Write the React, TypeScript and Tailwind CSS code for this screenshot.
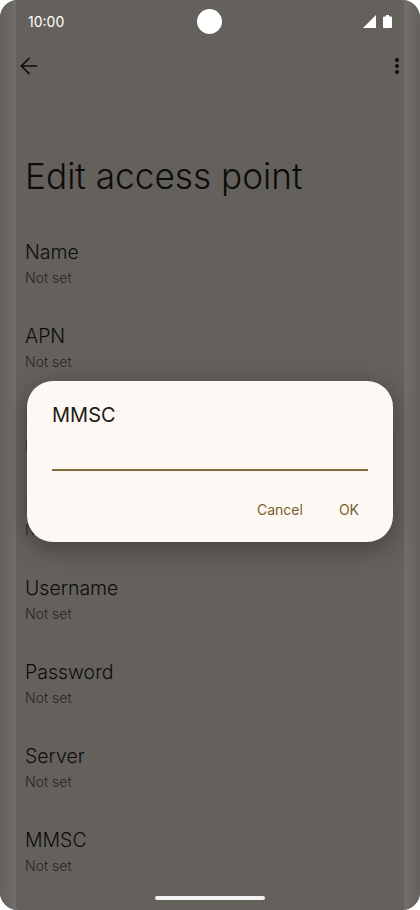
import { ArrowLeft } from 'lucide-react'

const rows = ['Name', 'APN', 'Proxy', 'Port', 'Username', 'Password', 'Server', 'MMSC']

export default function App() {
  return (
    <div className="relative w-[420px] h-[910px] overflow-hidden bg-white font-['Inter',sans-serif]">
      {/* Screen */}
      <div className="relative w-full h-full rounded-[18px] overflow-hidden bg-[#64615c]">
        {/* Status bar */}
        <div className="flex items-center justify-between h-[42px] pl-[28px] pr-[28px]">
          <span className="text-white text-[14px] font-normal">10:00</span>
          <div className="flex items-center gap-[7px]">
            <svg width="13" height="13" viewBox="0 0 13 13"><path d="M13 0V13H0Z" fill="#fff" /></svg>
            <svg width="9" height="13" viewBox="0 0 9 13"><path d="M3 0H6V1.5H8A1 1 0 0 1 9 2.5V12A1 1 0 0 1 8 13H1A1 1 0 0 1 0 12V2.5A1 1 0 0 1 1 1.5H3Z" fill="#fff" /></svg>
          </div>
        </div>

        {/* Toolbar */}
        <div className="flex items-center justify-between h-[48px] pl-[16px] pr-[20px]">
          <ArrowLeft className="w-[26px] h-[26px] text-[#0d0d0c]" strokeWidth={1.5} />
          <svg width="6" height="18" viewBox="0 0 6 18" fill="#0d0d0c">
            <circle cx="3" cy="3" r="2" />
            <circle cx="3" cy="9" r="2" />
            <circle cx="3" cy="15" r="2" />
          </svg>
        </div>

        <h1 className="mt-[62px] pl-[25px] text-[35.2px] leading-[48px] font-light text-[#0c0c0b]">Edit access point</h1>

        <div className="mt-[38px] pl-[25px] flex flex-col">
          {rows.map((r) => (
            <div key={r} className="h-[84px]">
              <div className="text-[19.5px] leading-[28px] font-light text-[#0c0c0b]">{r}</div>
              <div className="text-[14px] leading-[24px] font-light text-[#262522]">Not set</div>
            </div>
          ))}
        </div>

        {/* Edge strips */}
        <div className="absolute left-0 top-0 bottom-0 w-[16px] bg-gradient-to-r from-[#64615c] to-[#726f6b]" />
        <div className="absolute right-0 top-0 bottom-0 w-[16px] bg-gradient-to-l from-[#64615c] to-[#726f6b]" />

        {/* Camera + home indicator */}
        <div className="absolute left-[197px] top-[9px] w-[25px] h-[25px] rounded-full bg-white" />
        <div className="absolute left-[155px] bottom-[10px] w-[110px] h-[4px] rounded-full bg-[#f2f2f2]" />

        {/* Dialog */}
        <div className="absolute left-[27px] top-[381px] w-[366px] h-[161px] rounded-[26px] bg-[#fdf8f4] shadow-[0_6px_24px_rgba(0,0,0,0.35)] flex flex-col">
          <div className="pl-[25px] pt-[20px] text-[20px] leading-[28px] text-[#1e1c18]">MMSC</div>
          <div className="mx-[25px] mt-[40px] h-[2px] bg-[#866b3c]" />
          <div className="flex justify-end gap-[36px] pr-[34px] pt-[29px] text-[14px] leading-[20px] font-normal text-[#7a5f2e]">
            <span>Cancel</span>
            <span>OK</span>
          </div>
        </div>
      </div>
    </div>
  )
}
